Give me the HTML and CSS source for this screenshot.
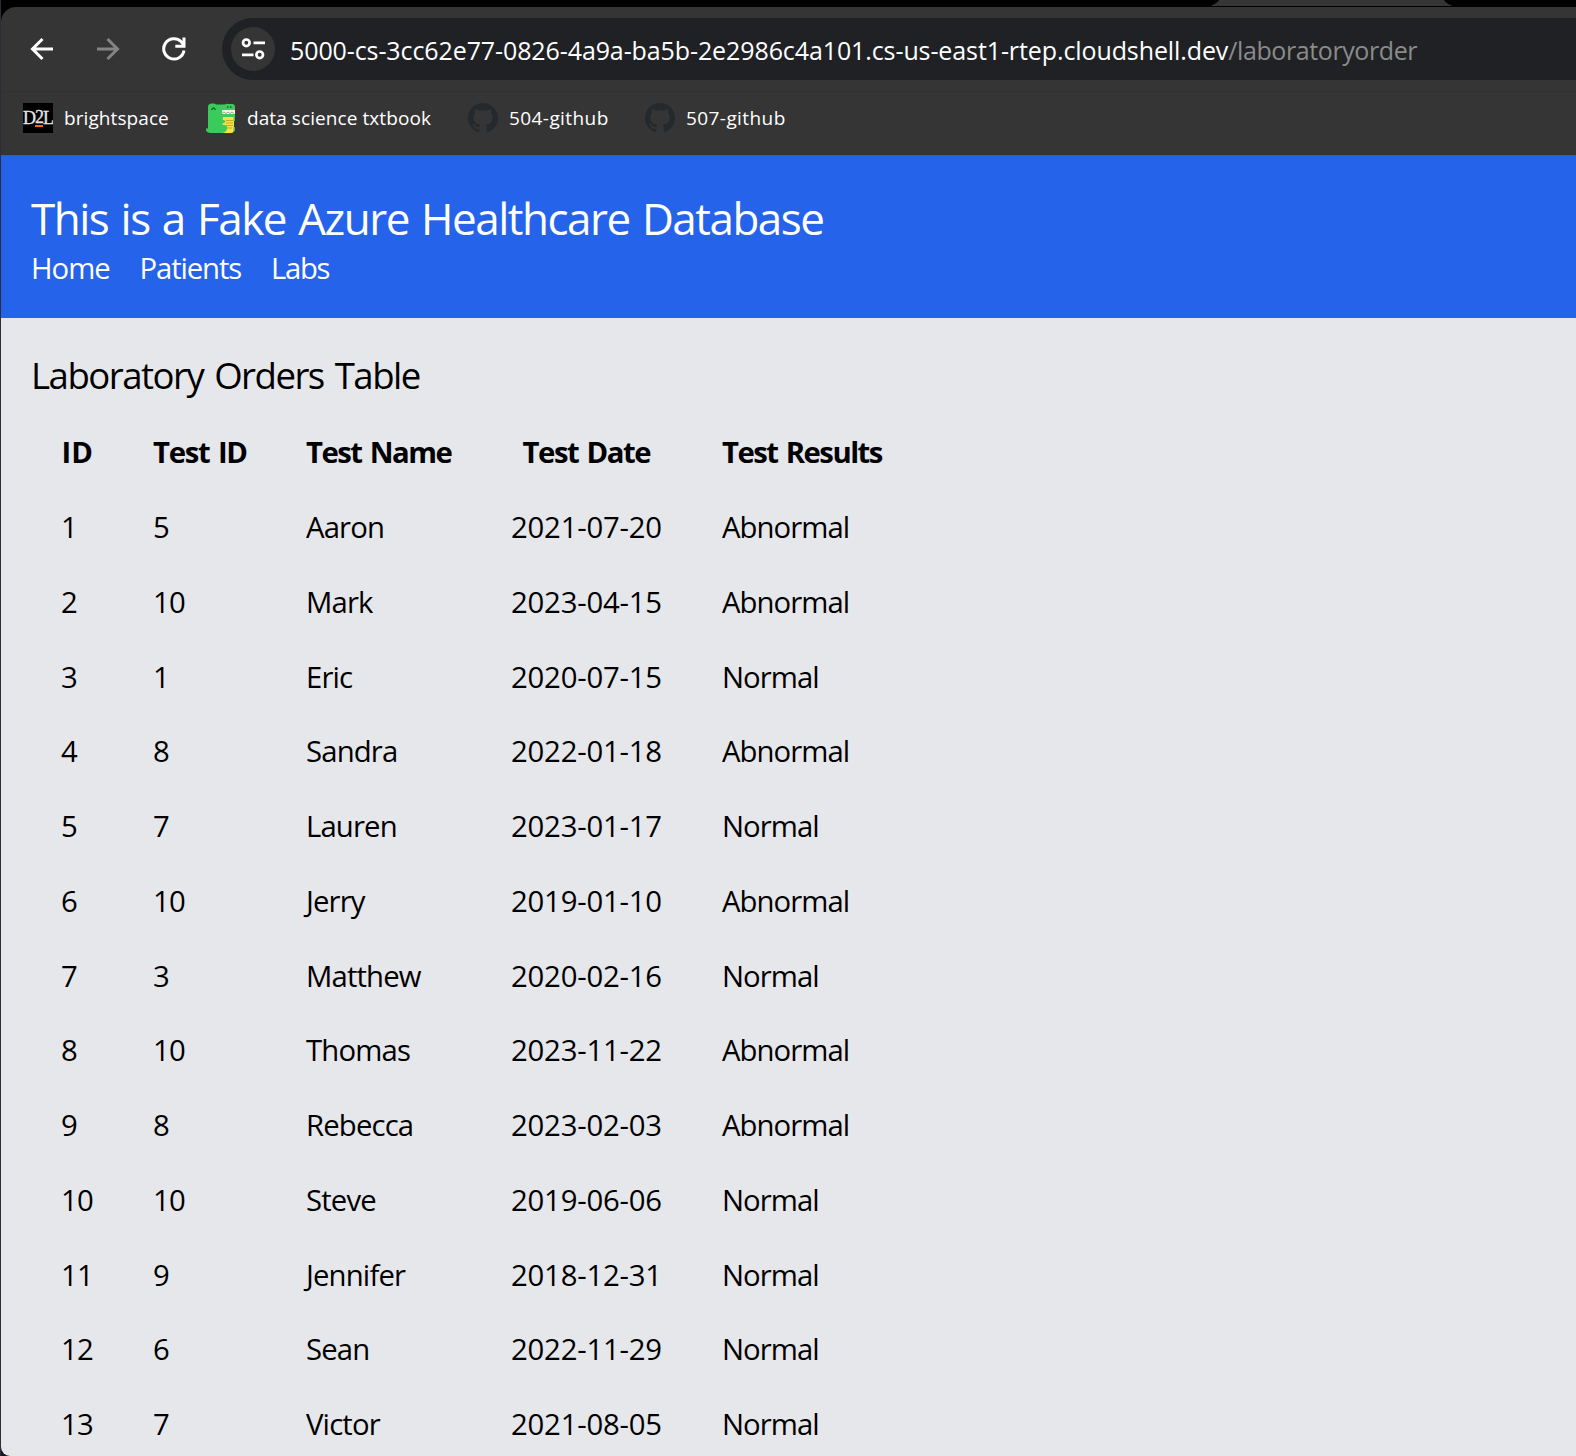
FILE: index.html
```html
<!DOCTYPE html>
<html lang="en">
<head>
<meta charset="utf-8">
<title>Laboratory Orders</title>
<link rel="stylesheet" href="styles.css">
</head>
<body>
<div class="window">
  <div class="tabstrip"><div class="tab-gap left"></div><div class="tab-gap right"></div></div>
  <div class="toolbar">
    <svg class="nav-icon back" viewBox="0 0 24 24"><path d="M23 12H3M12.500 2 2.500 12l10 10"/></svg>
    <svg class="nav-icon forward" viewBox="0 0 24 24"><path d="M1 12h20M11.500 2l10 10-10 10"/></svg>
    <svg class="nav-icon reload" viewBox="0 0 24 24"><path d="M22 13.500A10.200 10.200 0 1 1 19 4.500L21.500 7.500M22 .5v8.700h-8.700"/></svg>
    <div class="omnibox">
      <span class="site-info"><svg viewBox="0 0 24 24"><circle cx="5.300" cy="5.800" r="3.300"/><path d="M12.500 5.800H24M1 17.800h11.500"/><circle cx="18.700" cy="17.800" r="3.300"/></svg></span>
      <span class="url"><span class="host">5000-cs-3cc62e77-0826-4a9a-ba5b-2e2986c4a101.cs-us-east1-rtep.cloudshell.dev</span><span class="path">/laboratoryorder</span></span>
    </div>
  </div>
  <div class="bookmarks">
    <div class="bookmark bm1"><span class="d2l"><span>D</span><span class="two">2</span><span>L</span></span><span class="label">brightspace</span></div>
    <div class="bookmark bm2"><svg class="favicon" viewBox="0 0 30 30"><path fill="#3bcb5c" d="M2 4Q2 .5 6 .5q3-.5 4 1h9q1-1 3-.5h4q3 0 3 3v8H17v18H4q-4 0-4.500-4.500H2z"/><path fill="#f4f4f4" d="M16 7h13v4H16z"/><path stroke="#888" stroke-width=".8" fill="none" d="m16 10.500 2-1.500 2 1.500 2-1.500 2 1.500 2-1.500 2 1.500"/><path fill="#fde047" d="M17 14h11v13q0 3-3 3h-9z"/><path stroke="#b7a62c" stroke-width=".9" d="M20 17.500h7M20 20h7M20 22.500h7M21 25h5"/><path fill="#3bcb5c" d="M16 11.500h13v2.500H16zM15 17h3q3 1.500 0 3h-3zM15 22q7-1 6 4-1 4-6 4zM27.500 14h1.500v4h-1.500zM27.500 24h1.500v4h-1.500z"/><path stroke="#12682e" stroke-width="1.300" fill="none" d="M5.500 7q2-4 4 0M21 4h1.500M24 4h1.500"/></svg><span class="label">data science txtbook</span></div>
    <div class="bookmark bm3"><svg class="favicon" viewBox="0 0 16 16"><path fill="#24292e" d="M8 0C3.580 0 0 3.580 0 8c0 3.540 2.290 6.530 5.470 7.590.4.070.55-.17.55-.38 0-.19-.01-.82-.01-1.490-2.010.37-2.530-.49-2.690-.94-.09-.23-.48-.94-.82-1.130-.28-.15-.68-.52-.01-.53.63-.01 1.080.58 1.230.82.72 1.210 1.870.87 2.330.66.07-.52.28-.87.51-1.070-1.780-.2-3.640-.89-3.640-3.950 0-.87.31-1.590.82-2.150-.08-.2-.36-1.020.08-2.120 0 0 .67-.21 2.200.82.64-.18 1.320-.27 2-.27s1.360.09 2 .27c1.530-1.040 2.200-.82 2.200-.82.44 1.100.16 1.920.08 2.120.51.56.82 1.270.82 2.150 0 3.070-1.870 3.750-3.650 3.950.29.25.54.73.54 1.480 0 1.070-.01 1.930-.01 2.200 0 .21.15.46.55.38A8.010 8.010 0 0 0 16 8c0-4.420-3.580-8-8-8z"/></svg><span class="label">504-github</span></div>
    <div class="bookmark bm4"><svg class="favicon" viewBox="0 0 16 16"><path fill="#24292e" d="M8 0C3.580 0 0 3.580 0 8c0 3.540 2.290 6.530 5.470 7.590.4.070.55-.17.55-.38 0-.19-.01-.82-.01-1.490-2.010.37-2.530-.49-2.690-.94-.09-.23-.48-.94-.82-1.130-.28-.15-.68-.52-.01-.53.63-.01 1.080.58 1.230.82.72 1.210 1.870.87 2.330.66.07-.52.28-.87.51-1.070-1.780-.2-3.640-.89-3.640-3.950 0-.87.31-1.590.82-2.150-.08-.2-.36-1.020.08-2.120 0 0 .67-.21 2.200.82.64-.18 1.320-.27 2-.27s1.360.09 2 .27c1.530-1.040 2.200-.82 2.200-.82.44 1.100.16 1.920.08 2.120.51.56.82 1.270.82 2.150 0 3.070-1.870 3.750-3.650 3.950.29.25.54.73.54 1.480 0 1.070-.01 1.930-.01 2.200 0 .21.15.46.55.38A8.010 8.010 0 0 0 16 8c0-4.420-3.580-8-8-8z"/></svg><span class="label">507-github</span></div>
  </div>
  <header class="site-header">
    <h1>This is a Fake Azure Healthcare Database</h1>
    <nav><a class="home">Home</a><a class="patients">Patients</a><a class="labs">Labs</a></nav>
  </header>
  <main>
    <h2>Laboratory Orders Table</h2>
    <table>
      <colgroup><col class="c-id"><col class="c-test"><col class="c-name"><col class="c-date"><col class="c-result"></colgroup>
      <thead><tr><th class="h-id">ID</th><th class="h-test">Test ID</th><th>Test Name</th><th class="h-date">Test Date</th><th>Test Results</th></tr></thead>
      <tbody>
        <tr><td>1</td><td>5</td><td>Aaron</td><td>2021-07-20</td><td>Abnormal</td></tr>
        <tr><td>2</td><td>10</td><td>Mark</td><td>2023-04-15</td><td>Abnormal</td></tr>
        <tr><td>3</td><td>1</td><td>Eric</td><td>2020-07-15</td><td>Normal</td></tr>
        <tr><td>4</td><td>8</td><td>Sandra</td><td>2022-01-18</td><td>Abnormal</td></tr>
        <tr><td>5</td><td>7</td><td>Lauren</td><td>2023-01-17</td><td>Normal</td></tr>
        <tr><td>6</td><td>10</td><td>Jerry</td><td>2019-01-10</td><td>Abnormal</td></tr>
        <tr><td>7</td><td>3</td><td>Matthew</td><td>2020-02-16</td><td>Normal</td></tr>
        <tr><td>8</td><td>10</td><td>Thomas</td><td>2023-11-22</td><td>Abnormal</td></tr>
        <tr><td>9</td><td>8</td><td>Rebecca</td><td>2023-02-03</td><td>Abnormal</td></tr>
        <tr><td>10</td><td>10</td><td>Steve</td><td>2019-06-06</td><td>Normal</td></tr>
        <tr><td>11</td><td>9</td><td>Jennifer</td><td>2018-12-31</td><td>Normal</td></tr>
        <tr><td>12</td><td>6</td><td>Sean</td><td>2022-11-29</td><td>Normal</td></tr>
        <tr><td>13</td><td>7</td><td>Victor</td><td>2021-08-05</td><td>Normal</td></tr>
      </tbody>
    </table>
  </main>
</div>
</body>
</html>
```
FILE: styles.css
```css
* { box-sizing: border-box; }
body { margin: 0; background: #16141c; font-family: "Open Sans", "Noto Sans", sans-serif; color: #000; }
.window { height: 1456px; overflow: hidden; border-left: 1px solid #302d3b; }
.tabstrip { height: 7px; display: flex; align-items: flex-end; justify-content: space-between; background: #353535; overflow: hidden; }
.tab-gap { height: 27px; flex: none; background: #000; }
.tab-gap.left { width: 1223px; border-bottom-right-radius: 20px; }
.tab-gap.right { width: 137px; border-bottom-left-radius: 20px; }
.toolbar { height: 85px; display: flex; align-items: center; padding: 0 0 0 29px; background: #353535; border-top-left-radius: 15px; box-shadow: -15px -1px 0 #000; border-bottom: 1px solid #313131; }
.nav-icon { width: 24px; height: 24px; flex: none; fill: none; stroke: #fff; stroke-width: 3; }
.forward { margin-left: 42px; stroke: #848484; }
.reload { margin-left: 42px; }
.omnibox { align-self: flex-start; margin: 11px 0 0 36px; height: 62px; flex: 1; display: flex; align-items: center; padding-left: 9px; background: #202124; border-radius: 31px 0 0 31px; }
.site-info { width: 44px; height: 44px; border-radius: 50%; background: #353535; display: grid; place-items: center; flex: none; }
.site-info svg { width: 24px; height: 24px; fill: none; stroke: #fff; stroke-width: 2.700; }
.url { margin-left: 15px; padding-top: 1px; font-size: 25px; white-space: nowrap; color: #fff; }
.host { letter-spacing: -0.1px; }
.path { color: #8b8b8b; letter-spacing: -0.4px; }
.bookmarks { height: 64px; display: flex; align-items: center; padding: 0 0 11px 22px; background: #353535; border-bottom: 1px solid #5a5a5a; color: #fff; font-size: 19px; }
.bookmark { display: flex; align-items: center; gap: 11px; white-space: nowrap; letter-spacing: 0.08px; }
.bm1 { width: 183px; }
.bm2 { width: 262px; }
.bm3 { width: 177px; }
.bm3, .bm4 { letter-spacing: 0.42px; }
.favicon { width: 30px; height: 30px; flex: none; }
.d2l { width: 30px; height: 30px; background: #000; color: #e6e6e6; display: flex; align-items: center; justify-content: center; font: 18px/18px "Liberation Serif", serif; letter-spacing: -1px; overflow: hidden; }
.d2l span { -webkit-text-stroke: 0.3px #e6e6e6; }
.d2l .two { height: 17px; line-height: 14px; border-bottom: 2px solid #f06a1d; }
.site-header { height: 162px; background: #2563eb; color: #fff; padding: 32px 30px 0; }
h1 { margin: 0; font-size: 44px; font-weight: 400; line-height: 60px; letter-spacing: -1.500px; word-spacing: 2.300px; white-space: nowrap; }
nav { display: flex; font-size: 29.300px; line-height: 40px; }
.home { width: 108.500px; letter-spacing: -1px; }
.patients { width: 131.500px; letter-spacing: -1.130px; }
.labs { letter-spacing: -1.300px; }
main { height: 1138px; background: #e5e7eb; padding: 29px 30px 0; border-bottom-left-radius: 9px; }
h2 { margin: 0; font-size: 36.600px; font-weight: 400; line-height: 56px; height: 68px; letter-spacing: -1.520px; word-spacing: 3px; }
table { border-collapse: collapse; table-layout: fixed; width: 882px; font-size: 29.300px; }
.c-id { width: 92px; }
.c-test { width: 153px; }
.c-name { width: 205px; }
.c-date { width: 211px; }
.c-result { width: 221px; }
tr { height: 74.750px; }
th, td { padding: 0 0 0 30px; text-align: left; white-space: nowrap; line-height: 44px; }
th { letter-spacing: -1.500px; word-spacing: 2px; }
.h-id { letter-spacing: 0; padding-left: 30.500px; }
.h-test { letter-spacing: -1.250px; }
.h-date { padding-left: 41.500px; letter-spacing: -1.450px; }
td { letter-spacing: -0.950px; }
td:nth-child(1), td:nth-child(2) { letter-spacing: -0.8px; }
td:nth-child(3) { letter-spacing: -0.850px; }
td:nth-child(4) { letter-spacing: -0.200px; }
```
